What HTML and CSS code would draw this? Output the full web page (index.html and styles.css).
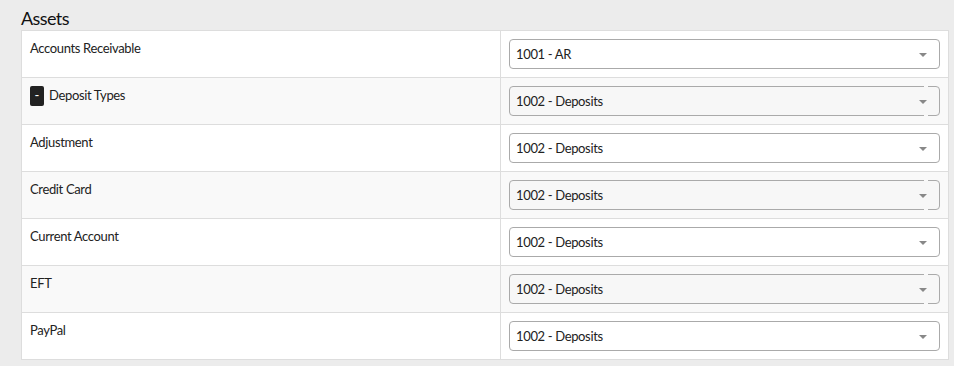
FILE: index.html
```html
<!DOCTYPE html>
<html lang="en">
<head>
    <meta charset="UTF-8">
    <meta name="viewport" content="width=device-width, initial-scale=1.0">
    <title>Account Mapping</title>
    <link rel="stylesheet" href="styles.css">
</head>
<body>
    <h3 class="section-title">Assets</h3>

    <table class="mapping-table">
        <tr>
            <td class="label-cell">Accounts Receivable</td>
            <td class="select-cell">
                <div class="select-box"><span>1001 - AR</span><b class="caret"></b></div>
            </td>
        </tr>
        <tr>
            <td class="label-cell"><span class="toggle">-</span>Deposit Types</td>
            <td class="select-cell">
                <div class="select-box"><span>1002 - Deposits</span><b class="caret"></b></div>
            </td>
        </tr>
        <tr>
            <td class="label-cell">Adjustment</td>
            <td class="select-cell">
                <div class="select-box"><span>1002 - Deposits</span><b class="caret"></b></div>
            </td>
        </tr>
        <tr>
            <td class="label-cell">Credit Card</td>
            <td class="select-cell">
                <div class="select-box"><span>1002 - Deposits</span><b class="caret"></b></div>
            </td>
        </tr>
        <tr>
            <td class="label-cell">Current Account</td>
            <td class="select-cell">
                <div class="select-box"><span>1002 - Deposits</span><b class="caret"></b></div>
            </td>
        </tr>
        <tr>
            <td class="label-cell">EFT</td>
            <td class="select-cell">
                <div class="select-box"><span>1002 - Deposits</span><b class="caret"></b></div>
            </td>
        </tr>
        <tr>
            <td class="label-cell">PayPal</td>
            <td class="select-cell">
                <div class="select-box"><span>1002 - Deposits</span><b class="caret"></b></div>
            </td>
        </tr>
    </table>
</body>
</html>
```

FILE: styles.css
```css
body {
    margin: 0;
    padding: 0 5px 0 21px;
    background-color: #ececec;
    font-family: Lato, "Liberation Sans", sans-serif;
    color: #222;
}
.section-title {
    margin: 0;
    height: 30px;
    padding-top: 6px;
    box-sizing: border-box;
    font-size: 18px;
    font-weight: normal;
    line-height: 24px;
    letter-spacing: -0.6px;
    color: #111;
}
.mapping-table {
    width: 928px;
    border-collapse: collapse;
    background-color: #fff;
    font-size: 13px;
    letter-spacing: -0.35px;
}
.mapping-table td {
    border: 1px solid #ddd;
    padding: 8px;
    vertical-align: top;
}
.mapping-table tr:nth-child(even) td {
    background-color: #f9f9f9;
}
.label-cell {
    width: 462px;
    line-height: 20px;
    padding-top: 7px !important;
}
.toggle {
    display: inline-block;
    width: 14px;
    height: 20px;
    margin: 1px 5px 0 0;
    border-radius: 2px;
    background-color: #222;
    color: #fff;
    text-align: center;
    line-height: 19px;
    letter-spacing: 0;
    vertical-align: top;
}
.select-box {
    position: relative;
    display: flex;
    align-items: center;
    height: 30px;
    padding-left: 6px;
    border: 1px solid #aaa;
    border-radius: 4px;
    background-color: #fff;
    box-sizing: border-box;
}
.mapping-table tr:nth-child(even) .select-box {
    background-color: #f7f7f7;
}
/* the broken border seen on striped rows */
.mapping-table tr:nth-child(even) .select-box::before,
.mapping-table tr:nth-child(even) .select-box::after {
    content: "";
    position: absolute;
    right: 11px;
    width: 4px;
    height: 1px;
    background-color: #f9f9f9;
}
.mapping-table tr:nth-child(even) .select-box::before {
    top: -1px;
}
.mapping-table tr:nth-child(even) .select-box::after {
    bottom: -1px;
}
.caret {
    position: absolute;
    right: 12px;
    top: 13px;
    border-left: 4px solid transparent;
    border-right: 4px solid transparent;
    border-top: 4px solid #888;
}
```
